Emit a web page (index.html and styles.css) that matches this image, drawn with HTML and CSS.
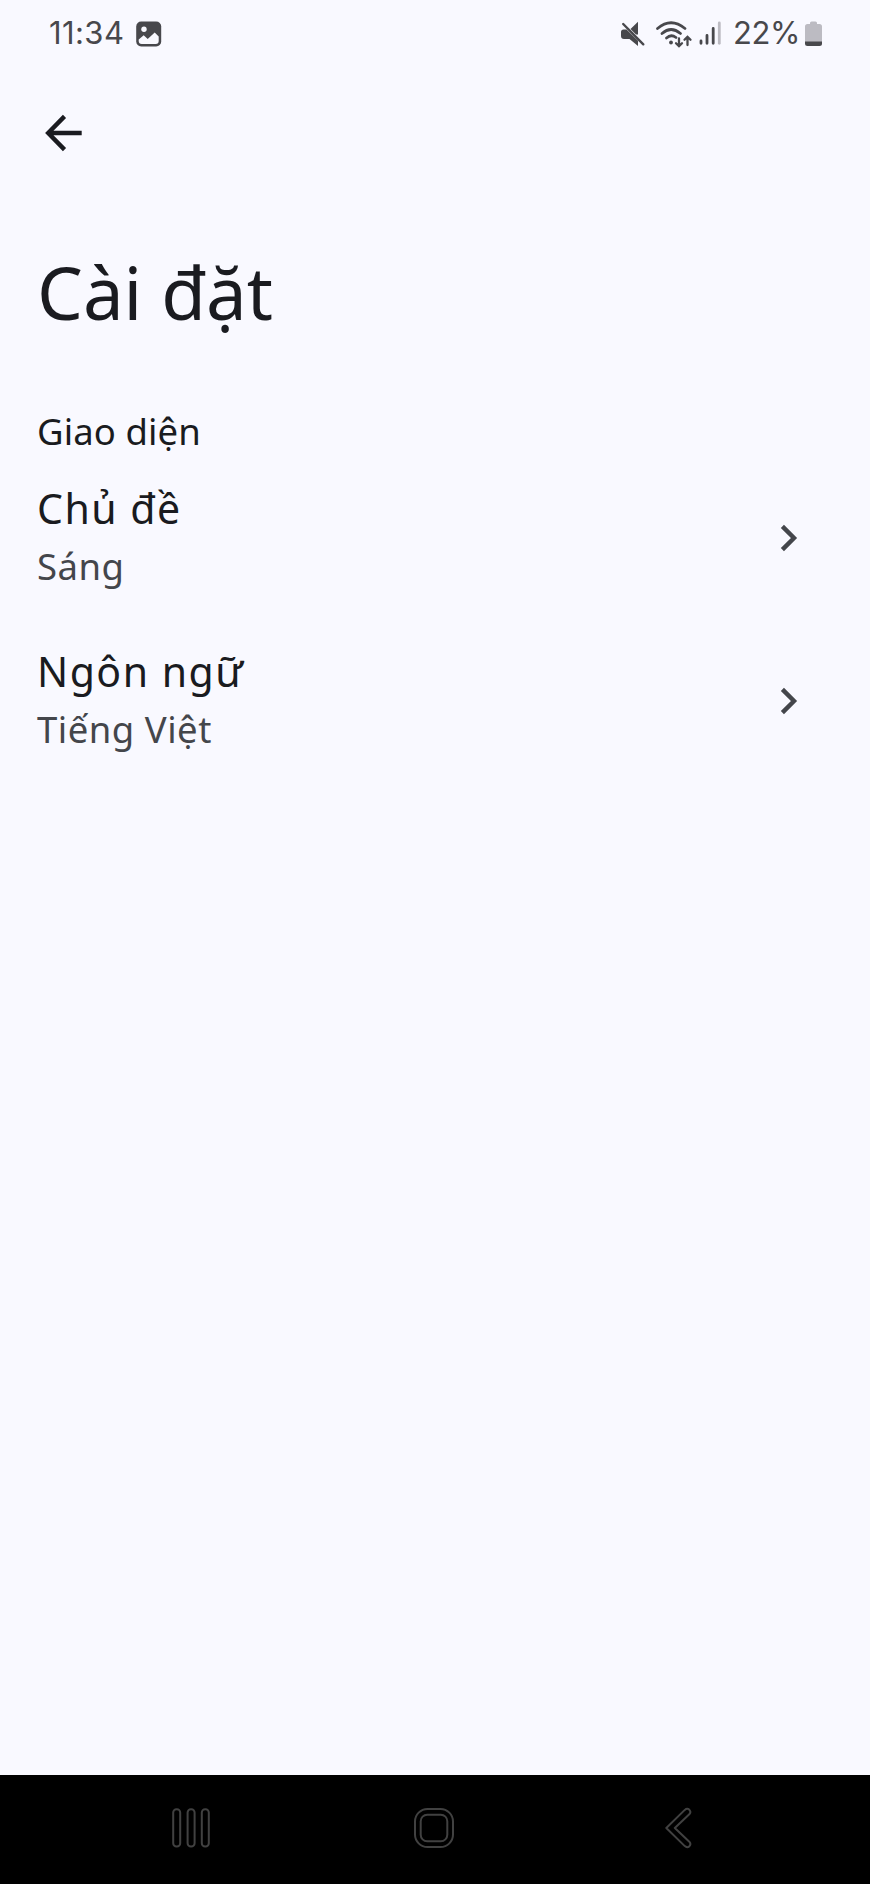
FILE: index.html
```
<!DOCTYPE html>
<html lang="vi">

<head>
  <meta charset="UTF-8" />
  <meta name="viewport" content="width=device-width, initial-scale=1" />
  <title>Cài đặt</title>
  <link rel="stylesheet" href="styles.css">
</head>

<body>
  <div class="screen">

    <!-- Thanh trạng thái -->
    <header class="status-bar">
      <span class="time">11:34</span>
      <svg class="icon-picture" width="26" height="26" viewBox="0 0 26 26">
        <rect x="0.2" y="0.5" width="25" height="25" rx="5" fill="#48484c" />
        <circle cx="8" cy="8.3" r="2.7" fill="#f9f9ff" />
        <path d="M2.7 18.5L7.7 14.3L11.7 18L18.7 11.5L22.7 15.5V20Q22.7 23 19.7 23H5.7Q2.7 23 2.7 20Z" fill="#f9f9ff" />
      </svg>
      <svg class="icon-mute" width="26" height="26" viewBox="0 0 26 26">
        <path d="M10.5 8L18 0.8V13.5L16 13.5Z" fill="#48484c" />
        <path d="M1 11Q1 8.5 3.5 8.5H6.5L18 19.8V25L9.5 18H4Q1 18 1 15Z" fill="#48484c" />
        <path d="M3.2 3L23.3 23.3" stroke="#48484c" stroke-width="2.4" stroke-linecap="round" />
      </svg>
      <svg class="icon-wifi" width="38" height="28" viewBox="0 0 38 28" fill="none" stroke="#48484c" stroke-width="2.7" stroke-linecap="round">
        <path d="M2.5 8.5Q16 -3 30 8.5M7 13.5Q16 5.5 25.5 13.5M11.5 18Q16 13.8 21 17.5" />
        <circle cx="16" cy="22.5" r="1.9" fill="#48484c" stroke="none" />
        <path d="M24 18.5V26M21 23.2L24 26.2L27 23.2M32.5 25V17M29.5 19.8L32.5 16.8L35.5 19.8" stroke-width="2.3" />
      </svg>
      <svg class="icon-signal" width="24" height="25" viewBox="0 0 24 25" stroke="#48484c" stroke-width="2.8" stroke-linecap="round">
        <path d="M2 20V22.3M8 14.5V22.3M14.2 7.5V22.3" />
        <path d="M20.3 2V22.3" stroke="#bcbbc2" />
      </svg>
      <span class="percent">22%</span>
      <svg class="icon-battery" width="18" height="26" viewBox="0 0 18 26">
        <path d="M5 3V2Q5 0.5 6.5 0.5H10.5Q12 0.5 12 2V3H14.5Q17 3 17 5.5V21H0V5.5Q0 3 2.5 3Z" fill="#bcbbc2" />
        <path d="M0 20.5H17V22.5Q17 25 14.5 25H2.5Q0 25 0 22.5Z" fill="#48484c" />
      </svg>
    </header>

    <nav class="top-bar">
      <svg class="icon-arrow" width="38" height="38" viewBox="0 0 38 38" fill="none" stroke="#1a1b20" stroke-width="4.4">
        <path d="M19.5 2.4L3.2 19L19.5 35.6M3.7 19H36.7" />
      </svg>
    </nav>

    <h1>Cài đặt</h1>

    <main class="settings">
      <h2>Giao diện</h2>

      <div class="row">
        <div class="row-text">
          <p class="row-title">Chủ đề</p>
          <p class="row-value">Sáng</p>
        </div>
        <svg width="18" height="28" viewBox="0 0 18 28" fill="none" stroke="#44464b" stroke-width="4.4">
          <path d="M2.4 2.4L14 14L2.4 25.6" />
        </svg>
      </div>

      <div class="row">
        <div class="row-text">
          <p class="row-title">Ngôn ngữ</p>
          <p class="row-value">Tiếng Việt</p>
        </div>
        <svg width="18" height="28" viewBox="0 0 18 28" fill="none" stroke="#44464b" stroke-width="4.4">
          <path d="M2.4 2.4L14 14L2.4 25.6" />
        </svg>
      </div>
    </main>

    <!-- Thanh điều hướng -->
    <footer class="nav-bar">
      <svg width="40" height="42" viewBox="0 0 40 42" fill="none" stroke="#414141" stroke-width="2">
        <rect x="2.2" y="2.2" width="7" height="37.4" rx="3.3" />
        <rect x="16.6" y="2.2" width="7" height="37.4" rx="3.3" />
        <rect x="30.8" y="2.2" width="7" height="37.4" rx="3.3" />
      </svg>
      <svg width="40" height="42" viewBox="0 0 40 42" fill="none" stroke="#414141" stroke-width="2">
        <rect x="1" y="2" width="38" height="38" rx="12.5" />
        <rect x="6.7" y="7.7" width="26.6" height="26.6" rx="6.5" />
      </svg>
      <svg width="28" height="42" viewBox="0 0 28 42" fill="none" stroke="#414141" stroke-width="2" stroke-linejoin="round">
        <path d="M2.3 21L20.8 2.9Q23.2 0.8 25.4 2.8Q27.4 5 25.3 7.3L10.8 21L25.3 34.7Q27.4 37 25.4 39.2Q23.2 41.2 20.8 39.1Z" />
      </svg>
    </footer>

  </div>
</body>

</html>
```
FILE: styles.css
```
* {
  box-sizing: border-box;
}

body {
  margin: 0;
  background-color: #f9f9ff;
  color: #1a1b20;
  font-family: "Noto Sans", sans-serif;
}

h1,
h2,
p {
  margin: 0;
  font-weight: 400;
  white-space: nowrap;
}

svg {
  display: block;
  flex-shrink: 0;
}

.screen {
  display: flex;
  flex-direction: column;
  height: 1884px;
}

.status-bar {
  display: flex;
  align-items: center;
  height: 67px;
  padding: 0 47px 0 49px;
  font-family: Inter, sans-serif;
  font-size: 31px;
  line-height: 38px;
  color: #48484c;
}

.time {
  width: 87px;
  padding-bottom: 2px;
  letter-spacing: 0.4px;
}

.icon-mute {
  margin-left: auto;
}

.icon-wifi {
  margin-left: 9px;
}

.icon-signal {
  margin-left: 6px;
}

.percent {
  width: 72px;
  margin-left: 10px;
  padding-bottom: 2px;
  letter-spacing: -0.4px;
}

.top-bar {
  padding: 47px 45px 0;
}

h1 {
  height: 56px;
  margin: 112px 37px 0;
  font-size: 72.6px;
  line-height: 56px;
  clip-path: inset(0 0 -40px 0);
}

.settings {
  flex: 1;
  padding: 85px 72px 0 37px;
}

h2 {
  margin-bottom: 23px;
  font-size: 36.5px;
  line-height: 52px;
  letter-spacing: 0.1px;
}

.row {
  display: flex;
  align-items: center;
  justify-content: space-between;
  height: 112px;
  margin-bottom: 51px;
}

.row-title {
  margin-bottom: 4px;
  font-size: 41px;
  line-height: 56px;
  letter-spacing: 1.5px;
}

.row-value {
  font-size: 36.5px;
  line-height: 52px;
  letter-spacing: 0.5px;
  color: #44464b;
}

.row svg {
  margin-top: 4px;
}

.nav-bar {
  display: flex;
  align-items: center;
  gap: 203px;
  height: 109px;
  padding: 0 0 3px 171px;
  background-color: #000;
}

.nav-bar svg:last-child {
  margin-left: 7px;
}
```
